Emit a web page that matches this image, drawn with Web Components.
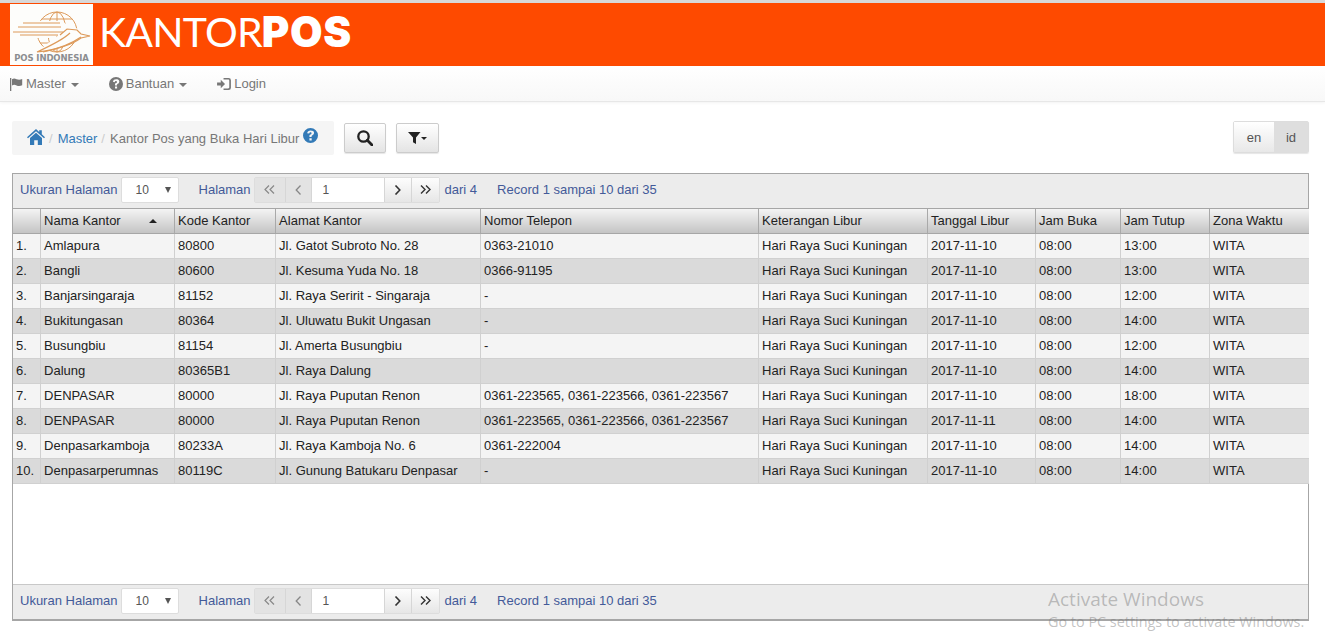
<!DOCTYPE html>
<html>
<head>
<meta charset="utf-8">
<title>Kantor Pos yang Buka Hari Libur</title>
<style>
  html, body { margin: 0; padding: 0; background: #fff; }
  body { font-family: "Liberation Sans", Arial, sans-serif; font-size: 13px; color: #333; height: 633px; overflow: hidden; position: relative; }
</style>
</head>
<body>
<kp-header></kp-header>
<kp-nav></kp-nav>
<kp-toolbar></kp-toolbar>
<kp-grid></kp-grid>
<kp-watermark></kp-watermark>

<script>
const ICONS = {
    flag: '<svg width="13" height="13" viewBox="0 0 13 13"><path fill="currentColor" d="M0 0h1.3v13H0zM2 1.2c1.6-1 3-.7 4.6 0 1.7.7 3.6.7 5.6-.2v6.2c-2 1-3.900 1-5.600.2-1.600-.7-3-.9-4.600 0z"/></svg>',
    help: '<svg width="14" height="14" viewBox="0 0 14 14"><path fill="currentColor" fill-rule="evenodd" d="M7 0a7 7 0 1 1 0 14A7 7 0 0 1 7 0zM6 9.600v2h2.100v-2zM7.100 2.300c-1.700 0-2.900.8-3.200 2.500l1.900.4c.1-.8.600-1.200 1.200-1.200.6 0 1 .3 1 .9 0 .5-.3.8-.9 1.200C6.300 6.200 6 6.800 6 7.700v.7h2v-.5c0-.5.200-.7.800-1.100.9-.6 1.500-1.300 1.500-2.400 0-1.500-1.300-2.100-3.200-2.100z"/></svg>',
    login: '<svg width="14" height="12" viewBox="0 0 15 13"><path fill="currentColor" d="M0 4.800h4V2l4.600 4.500L4 11V8.200H0zM7 0h5.500A2.500 2.500 0 0 1 15 2.500v8a2.500 2.500 0 0 1-2.500 2.500H7v-1.700h5c.7 0 1.200-.5 1.200-1.200V2.900c0-.7-.5-1.200-1.200-1.200H7z"/></svg>',
    home: '<svg width="18" height="16" viewBox="0 0 18 16"><path fill="currentColor" d="M9 0l3.200 2.900V1.200h2.600v4L18 8.200l-1 1.100L9 2.200 1 9.300 0 8.200zM9 3.700l6 5.300V16h-4.200v-4.700H7.200V16H3V9z"/></svg>',
    search: '<svg width="16" height="16" viewBox="0 0 16 16"><circle cx="6.500" cy="6.500" r="5.200" fill="none" stroke="currentColor" stroke-width="2.300"/><path d="M10.300 10.300L15 15" stroke="currentColor" stroke-width="2.800" stroke-linecap="round"/></svg>',
    filter: '<svg width="19" height="13" viewBox="0 0 19 13"><path fill="currentColor" d="M0 0h12.500L8 5.500V12l-3-1.800V5.500z"/><path fill="currentColor" d="M13 5h6l-3 3z"/></svg>',
    first: '<svg width="11" height="9" viewBox="0 0 11 9"><path fill="none" stroke="currentColor" stroke-width="1.200" d="M5 .5L1 4.500l4 4M10 .5L6 4.500l4 4"/></svg>',
    prev: '<svg width="7" height="10" viewBox="0 0 7 10"><path fill="none" stroke="currentColor" stroke-width="1.300" d="M5.500.5L1.200 5l4.300 4.500"/></svg>',
    next: '<svg width="7" height="10" viewBox="0 0 7 10"><path fill="none" stroke="currentColor" stroke-width="1.600" d="M1.500.5L5.800 5 1.500 9.500"/></svg>',
    last: '<svg width="11" height="9" viewBox="0 0 11 9"><path fill="none" stroke="currentColor" stroke-width="1.400" d="M1 .5l4 4-4 4M6 .5l4 4-4 4"/></svg>'
};

class KpHeader extends HTMLElement {
    constructor() {
        super();
        this.attachShadow({ mode: 'open' });
        this.shadowRoot.innerHTML = `
            <style>
                :host { display: flex; height: 63px; margin-top: 3px; padding-left: 10px; background: #fe4a00; box-shadow: 0 -3px 0 #d8d8d8; align-items: stretch; }
                .logo { width: 83px; margin: 1px 0; background: #fdfdfb; display: flex; flex-direction: column; align-items: center; overflow: hidden; }
                .logo svg { display: block; margin-top: 4px; }
                .logo span { font: bold 8.500px/10px "DejaVu Sans", sans-serif; color: #8b8d90; white-space: nowrap; letter-spacing: -.1px; }
                .name { font: 400 41px/57px Lato, sans-serif; color: #fff; margin-left: 6px; white-space: nowrap; letter-spacing: -.8px; }
                .name b { font: 900 42px/57px Inter, sans-serif; letter-spacing: .6px; }
            </style>
            <div class="logo">
                <svg width="83" height="45" viewBox="0 0 83 45" fill="none" stroke="#dd9a5a" stroke-width="1">
                    <circle cx="47" cy="24" r="20"/>
                    <ellipse cx="47" cy="24" rx="9" ry="20"/>
                    <path d="M47 4v40M32 11h30M27 22h40M30 35h34"/>
                    <path fill="#fdfdfb" stroke="none" d="M2 13h50l8 6 10 2 10 6-8 3c-12 8-28 12-47 15l8-6 16-12-10 3H8z"/>
                    <path d="M13 15h37M8 19h43M3 24h50M10 27h38"/>
                    <path stroke-width="1.200" d="M50 27l7-6 10 1 4 4 9 2-9 2C60 38 44 42 27 44c13-6 27-13 33-19"/>
                    <path stroke-width="1.200" d="M33 44c15-3 28-8 38-15"/>
                </svg>
                <span>POS INDONESIA</span>
            </div>
            <div class="name">KANTOR<b>POS</b></div>`;
    }
}

class KpNavItem extends HTMLElement {
    constructor() {
        super();
        this.attachShadow({ mode: 'open' });
        const icon = this.getAttribute('icon');
        const caret = this.hasAttribute('caret') ? '<i class="caret"></i>' : '';
        this.shadowRoot.innerHTML = `
            <style>
                :host { display: flex; align-items: center; gap: 3px; color: #777; font-size: 13px; line-height: 20px; white-space: nowrap; }
                svg { display: block; }
                .caret { width: 0; height: 0; border: 4px solid transparent; border-top-color: #777; border-bottom: 0; margin-left: 2px; margin-top: 2px; }
            </style>
            ${ICONS[icon]}<slot></slot>${caret}`;
    }
}

class KpNav extends HTMLElement {
    constructor() {
        super();
        this.attachShadow({ mode: 'open' });
        this.shadowRoot.innerHTML = `
            <style>
                :host { display: flex; gap: 30px; height: 36px; padding: 1px 0 0 10px; align-items: center; box-sizing: border-box; background: linear-gradient(#fff, #f8f8f8); border-bottom: 1px solid #e7e7e7; box-shadow: 0 1px 3px rgba(0,0,0,.05); }
            </style>
            <kp-nav-item icon="flag" caret>Master</kp-nav-item>
            <kp-nav-item icon="help" caret>Bantuan</kp-nav-item>
            <kp-nav-item icon="login">Login</kp-nav-item>`;
    }
}

class KpToolbar extends HTMLElement {
    constructor() {
        super();
        this.attachShadow({ mode: 'open' });
        this.shadowRoot.innerHTML = `
            <style>
                :host { display: flex; align-items: flex-start; height: 34px; margin: 19px 16px 0 12px; }
                ol { list-style: none; display: flex; align-items: center; margin: 0; padding: 0 15px; width: 322px; height: 34px; box-sizing: border-box; background: #f5f5f5; border-radius: 2px; color: #777; white-space: nowrap; font-size: 13px; }
                li { display: flex; align-items: center; }
                .sep { color: #ccc; padding: 0 5px 0 4px; }
                .link { color: #337ab7; }
                .home { color: #337ab7; margin-right: 0; margin-top: -3px; }
                .help { color: #337ab7; margin-left: 4px; margin-top: -5px; }
                svg { display: block; }
                button { font: inherit; height: 30px; box-sizing: border-box; border: 1px solid #ccc; border-radius: 2px; background: linear-gradient(#fff, #e4e4e4); color: #222; padding: 0; display: flex; align-items: center; justify-content: center; margin: 2px 0 0 10px; box-shadow: 0 1px 1px rgba(0,0,0,.1); }
                .search { width: 42px; }
                .filter { width: 43px; }
                .lang { margin-left: auto; display: flex; height: 32px; border: 1px solid #ddd; border-radius: 2px; box-sizing: border-box; box-shadow: 0 1px 1px rgba(0,0,0,.1); color: #555; font-size: 13px; }
                .lang span { display: flex; align-items: center; justify-content: center; }
                .en { width: 40px; background: linear-gradient(#fff, #e8e8e8); }
                .id { width: 34px; background: #dedede; }
            </style>
            <ol>
                <li class="home">${ICONS.home}</li>
                <li class="sep">/</li>
                <li class="link">Master</li>
                <li class="sep">/</li>
                <li>Kantor Pos yang Buka Hari Libur</li>
                <li class="help">${ICONS.help.replace(/width="14" height="14"/, 'width="15" height="15"')}</li>
            </ol>
            <button class="search" aria-label="Cari">${ICONS.search}</button>
            <button class="filter" aria-label="Saring">${ICONS.filter}</button>
            <div class="lang"><span class="en">en</span><span class="id">id</span></div>`;
    }
}

class KpPager extends HTMLElement {
    constructor() {
        super();
        this.attachShadow({ mode: 'open' });
        this.shadowRoot.innerHTML = `
            <style>
                :host { display: flex; align-items: center; height: 34px; padding: 0 0 3px 7px; box-sizing: border-box; background: #ececec; color: #435a99; white-space: nowrap; font-size: 13px; }
                .select { width: 58px; height: 26px; box-sizing: border-box; border: 1px solid #ddd; background: #fff; margin-left: 3px; display: flex; align-items: center; justify-content: space-between; padding: 0 7px 0 14px; color: #555; font-size: 12px; border-radius: 2px; }
                .select i { width: 0; height: 0; border: 3.500px solid transparent; border-top: 6px solid #555; border-bottom: 0; }
                .page { margin-left: 20px; }
                .group { display: flex; height: 26px; margin-left: 3px; border: 1px solid #ddd; box-sizing: border-box; border-radius: 2px; }
                .group span { display: flex; align-items: center; justify-content: center; box-sizing: border-box; }
                .off { background: #e3e3e3; color: #888; border-right: 1px solid #d6d6d6; }
                .on { background: linear-gradient(#fdfdfd, #e6e6e6); color: #333; border-left: 1px solid #d6d6d6; }
                .input { width: 72px; background: #fff; color: #555; font-size: 12px; justify-content: flex-start !important; padding-left: 11px; }
                .of { margin-left: 5px; }
                .rec { margin-left: 20px; }
                svg { display: block; }
            </style>
            <span>Ukuran Halaman</span>
            <div class="select"><span>10</span><i></i></div>
            <span class="page">Halaman</span>
            <div class="group">
                <span class="off" style="width:31px">${ICONS.first}</span>
                <span class="off" style="width:26px">${ICONS.prev}</span>
                <span class="input">1</span>
                <span class="on" style="width:27px">${ICONS.next}</span>
                <span class="on" style="width:28px">${ICONS.last}</span>
            </div>
            <span class="of">dari 4</span>
            <span class="rec">Record 1 sampai 10 dari 35</span>`;
    }
}

const COLUMNS = ['', 'Nama Kantor', 'Kode Kantor', 'Alamat Kantor', 'Nomor Telepon', 'Keterangan Libur', 'Tanggal Libur', 'Jam Buka', 'Jam Tutup', 'Zona Waktu'];
const WIDTHS = [27, 134, 101, 205, 278, 169, 108, 85, 89, 100];
const HOLIDAY = 'Hari Raya Suci Kuningan';
const PHONES = '0361-223565, 0361-223566, 0361-223567';
const ROWS = [
    ['1.', 'Amlapura', '80800', 'Jl. Gatot Subroto No. 28', '0363-21010', HOLIDAY, '2017-11-10', '08:00', '13:00', 'WITA'],
    ['2.', 'Bangli', '80600', 'Jl. Kesuma Yuda No. 18', '0366-91195', HOLIDAY, '2017-11-10', '08:00', '13:00', 'WITA'],
    ['3.', 'Banjarsingaraja', '81152', 'Jl. Raya Seririt - Singaraja', '-', HOLIDAY, '2017-11-10', '08:00', '12:00', 'WITA'],
    ['4.', 'Bukitungasan', '80364', 'Jl. Uluwatu Bukit Ungasan', '-', HOLIDAY, '2017-11-10', '08:00', '14:00', 'WITA'],
    ['5.', 'Busungbiu', '81154', 'Jl. Amerta Busungbiu', '-', HOLIDAY, '2017-11-10', '08:00', '12:00', 'WITA'],
    ['6.', 'Dalung', '80365B1', 'Jl. Raya Dalung', '', HOLIDAY, '2017-11-10', '08:00', '14:00', 'WITA'],
    ['7.', 'DENPASAR', '80000', 'Jl. Raya Puputan Renon', PHONES, HOLIDAY, '2017-11-10', '08:00', '18:00', 'WITA'],
    ['8.', 'DENPASAR', '80000', 'Jl. Raya Puputan Renon', PHONES, HOLIDAY, '2017-11-11', '08:00', '14:00', 'WITA'],
    ['9.', 'Denpasarkamboja', '80233A', 'Jl. Raya Kamboja No. 6', '0361-222004', HOLIDAY, '2017-11-10', '08:00', '14:00', 'WITA'],
    ['10.', 'Denpasarperumnas', '80119C', 'Jl. Gunung Batukaru Denpasar', '-', HOLIDAY, '2017-11-10', '08:00', '14:00', 'WITA']
];

class KpGrid extends HTMLElement {
    constructor() {
        super();
        this.attachShadow({ mode: 'open' });
        const head = COLUMNS.map((c, i) => i === 1
            ? `<th><div class="sort">${c}<i></i></div></th>`
            : `<th>${c}</th>`).join('');
        const body = ROWS.map(r => `<tr>${r.map(c => `<td>${c}</td>`).join('')}</tr>`).join('');
        this.shadowRoot.innerHTML = `
            <style>
                :host { display: flex; flex-direction: column; height: 448px; margin: 18px 16px 0 12px; box-sizing: border-box; border: 1px solid #a6a6a6; border-bottom-width: 2px; font-size: 13px; }
                .body { flex: 1; min-height: 0; background: #fff; border-top: 1px solid #a6a6a6; border-bottom: 1px solid #c8c8c8; }
                table { border-collapse: collapse; table-layout: fixed; width: 1296px; color: #222; }
                th { height: 24px; padding: 0 3px 0 3.600px; font-weight: normal; text-align: left; background: linear-gradient(#f4f4f4, #c4c4c4); border-right: 1px solid #a9a9a9; border-bottom: 1px solid #a6a6a6; box-sizing: border-box; white-space: nowrap; }
                td { height: 25px; padding: 0 3px 0 3.600px; border-right: 1px solid #d0d0d0; border-bottom: 1px solid #d0d0d0; box-sizing: border-box; white-space: nowrap; overflow: hidden; }
                td:first-child { padding-left: 3px; }
                tr:nth-child(odd) td { background: #f4f4f4; }
                tr:nth-child(even) td { background: #dadada; }
                th:last-child, td:last-child { border-right: 0; }
                .sort { display: flex; align-items: center; justify-content: space-between; padding-right: 14px; }
                .sort i { width: 0; height: 0; border: 4px solid transparent; border-bottom: 4px solid #222; border-top: 0; }
            </style>
            <kp-pager></kp-pager>
            <div class="body">
                <table>
                    <colgroup>${WIDTHS.map(w => `<col style="width:${w}px">`).join('')}</colgroup>
                    <thead><tr>${head}</tr></thead>
                    <tbody>${body}</tbody>
                </table>
            </div>
            <kp-pager></kp-pager>`;
    }
}

class KpWatermark extends HTMLElement {
    constructor() {
        super();
        this.attachShadow({ mode: 'open' });
        this.shadowRoot.innerHTML = `
            <style>
                :host { display: block; position: absolute; left: 1048px; top: 586px; color: rgba(120,120,120,.45); font-family: "Open Sans", sans-serif; white-space: nowrap; pointer-events: none; }
                .big { font-size: 19px; line-height: 27px; }
                .small { font-size: 14.400px; line-height: 19px; margin-top: -1px; }
            </style>
            <div class="big">Activate Windows</div>
            <div class="small">Go to PC settings to activate Windows.</div>`;
    }
}

customElements.define('kp-header', KpHeader);
customElements.define('kp-nav-item', KpNavItem);
customElements.define('kp-nav', KpNav);
customElements.define('kp-toolbar', KpToolbar);
customElements.define('kp-pager', KpPager);
customElements.define('kp-grid', KpGrid);
customElements.define('kp-watermark', KpWatermark);
</script>
</body>
</html>
